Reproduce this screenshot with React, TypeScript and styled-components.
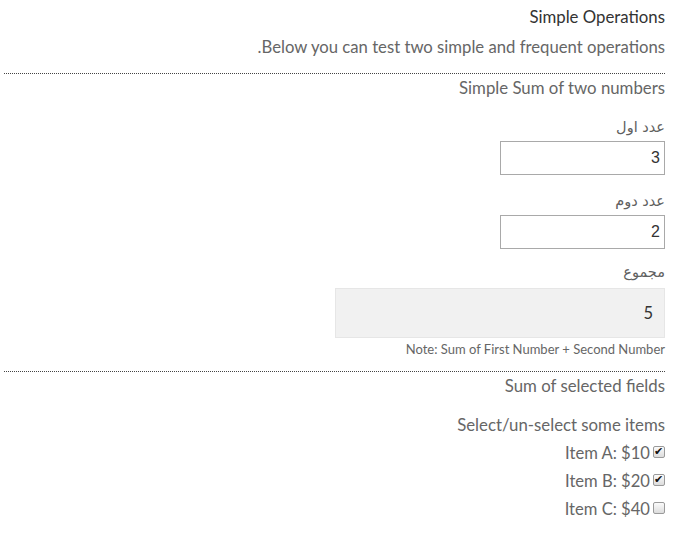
import React, { useState } from "react";
import styled, { createGlobalStyle } from "styled-components";

const GlobalStyle = createGlobalStyle`
  html, body {
    margin: 0;
    padding: 0;
    background: #ffffff;
  }
  body {
    font-family: Lato, "Open Sans", sans-serif;
  }
`;

const Page = styled.div`
  direction: rtl;
  width: 661px;
  padding: 5px 30px 0 4px;
  color: #666666;
`;

const Title = styled.h3`
  margin: 0;
  font-size: 16.8px;
  line-height: 24px;
  font-weight: 400;
  color: #333333;
`;

const Lead = styled.p`
  margin: 6px 0 0;
  font-size: 16.7px;
  line-height: 24px;
  color: #666666;
`;

const Divider = styled.hr`
  margin: 14px 0 0;
  border: none;
  border-top: 1px dotted #444444;
  height: 0;
`;

const SectionTitle = styled.h4<{ $gap?: number }>`
  margin: ${(p) => p.$gap ?? 2}px 0 0;
  font-size: 16.8px;
  line-height: 24px;
  font-weight: 400;
  color: #666666;
`;

const Field = styled.div<{ $gap: number }>`
  display: flex;
  flex-direction: column;
  align-items: flex-start;
  margin-top: ${(p) => p.$gap}px;
`;

const Label = styled.label`
  font-family: "DejaVu Sans", sans-serif;
  font-size: 14.5px;
  line-height: 20px;
  color: #606060;
`;

const NumberInput = styled.input`
  box-sizing: border-box;
  width: 165px;
  height: 34px;
  margin-top: 4px;
  padding: 0 4px;
  border: 1px solid #a9a9a9;
  font-family: "Liberation Sans", Arial, sans-serif;
  font-size: 16px;
  color: #333333;
  direction: rtl;
  outline: none;
`;

const ResultBox = styled.div`
  box-sizing: border-box;
  width: 330px;
  height: 50px;
  margin-top: 6px;
  padding: 0 11px;
  display: flex;
  align-items: center;
  background: #f1f1f1;
  border: 1px solid #e6e6e6;
  font-family: Lato, sans-serif;
  font-size: 16.5px;
  color: #333333;
`;

const Note = styled.small`
  display: block;
  margin-top: 3px;
  font-size: 13px;
  line-height: 16px;
  color: #666666;
`;

const ItemList = styled.div`
  display: flex;
  flex-direction: column;
  gap: 4px;
  margin-top: 4px;
`;

const ItemRow = styled.label`
  display: flex;
  align-items: center;
  gap: 3px;
  font-size: 16.6px;
  line-height: 24px;
  color: #666666;
`;

const Check = styled.input`
  appearance: none;
  position: relative;
  box-sizing: border-box;
  width: 12px;
  height: 12px;
  margin: 0 0 2px;
  border: 1px solid #9a9a9a;
  border-radius: 2px;
  background: linear-gradient(#fbfbfb, #dcdcdc);

  &:checked::after {
    content: "✔";
    position: absolute;
    left: 0;
    top: -2px;
    font-family: "DejaVu Sans", sans-serif;
    font-size: 11px;
    font-weight: 700;
    line-height: 13px;
    color: #111111;
  }
`;

const items = [
  { name: "Item A", price: 10, checked: true },
  { name: "Item B", price: 20, checked: true },
  { name: "Item C", price: 40, checked: false },
];

export default function App() {
  const [first, setFirst] = useState("3");
  const [second, setSecond] = useState("2");
  const [selected, setSelected] = useState(items.map((i) => i.checked));

  const sum = (Number(first) || 0) + (Number(second) || 0);

  return (
    <>
      <GlobalStyle />
      <Page>
        <Title>Simple Operations</Title>
        <Lead>Below you can test two simple and frequent operations.</Lead>
        <Divider />
        <SectionTitle>Simple Sum of two numbers</SectionTitle>
        <Field $gap={17}>
          <Label>عدد اول</Label>
          <NumberInput value={first} onChange={(e) => setFirst(e.target.value)} />
        </Field>
        <Field $gap={16}>
          <Label>عدد دوم</Label>
          <NumberInput value={second} onChange={(e) => setSecond(e.target.value)} />
        </Field>
        <Field $gap={13}>
          <Label>مجموع</Label>
          <ResultBox>{sum}</ResultBox>
        </Field>
        <Note>Note: Sum of First Number + Second Number</Note>
        <Divider />
        <SectionTitle>Sum of selected fields</SectionTitle>
        <SectionTitle $gap={15}>Select/un-select some items</SectionTitle>
        <ItemList>
          {items.map((item, i) => (
            <ItemRow key={item.name}>
              <Check
                type="checkbox"
                checked={selected[i]}
                onChange={() =>
                  setSelected(selected.map((s, j) => (j === i ? !s : s)))
                }
              />
              <span dir="ltr">
                {item.name}: ${item.price}
              </span>
            </ItemRow>
          ))}
        </ItemList>
      </Page>
    </>
  );
}
